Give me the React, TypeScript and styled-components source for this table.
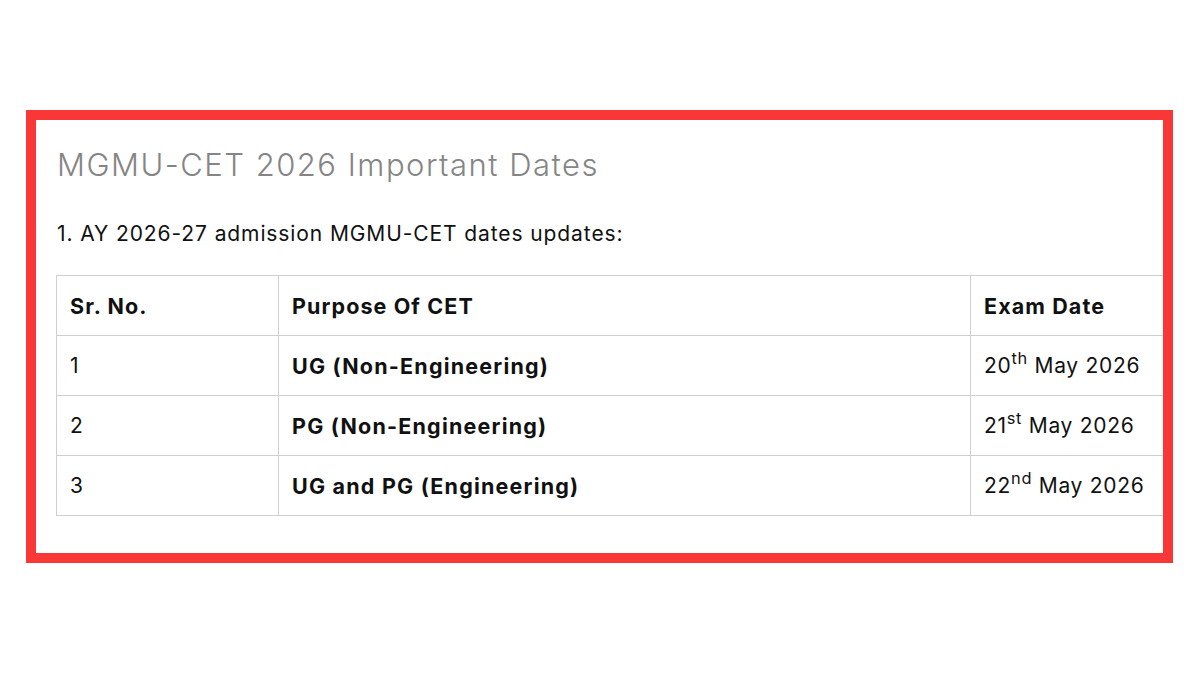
import React from "react";
import styled, { createGlobalStyle } from "styled-components";

const Global = createGlobalStyle`
  html, body { margin: 0; padding: 0; background: #ffffff; }
  body { font-family: "Inter", "Noto Sans", sans-serif; }
`;

const Page = styled.div`
  width: 1200px;
  height: 675px;
  padding: 110px 0 0 26px;
  box-sizing: border-box;
`;

const Frame = styled.section`
  width: 1147px;
  height: 453px;
  border: 10px solid #f93737;
  box-sizing: border-box;
  overflow: hidden;
  padding: 0 0 0 20px;
`;

const Title = styled.h2`
  margin: 25px 0 0 1px;
  font-size: 31px;
  font-weight: 300;
  color: #858585;
  line-height: 40px;
  letter-spacing: 1.5px;
`;

const Sub = styled.p`
  margin: 34px 0 0 1px;
  font-size: 21px;
  font-weight: 400;
  color: #111;
  line-height: 30px;
  letter-spacing: 0.9px;
`;

const Table = styled.table`
  margin-top: 26px;
  border-collapse: collapse;
  width: 1140px;
  table-layout: fixed;
`;

const Cell = styled.td<{ $bold?: boolean }>`
  border: 1px solid #cfcfcf;
  height: 59px;
  padding: 0 13px;
  font-size: ${(p) => (p.$bold ? "21.5px" : "21px")};
  font-weight: ${(p) => (p.$bold ? 700 : 400)};
  letter-spacing: ${(p) => (p.$bold ? "1.2px" : "0.7px")};
  color: #111;
  vertical-align: middle;
  white-space: nowrap;
`;

const Head = styled(Cell).attrs({ as: "th" })`
  text-align: left;
  font-size: 21.5px;
  font-weight: 700;
  letter-spacing: 1.1px;
`;

const Sup = styled.sup`
  font-size: 0.78em;
  line-height: 0;
  vertical-align: 0.55em;
`;

const rows = [
  { n: "1", p: "UG (Non-Engineering)", d: "20", s: "th" },
  { n: "2", p: "PG (Non-Engineering)", d: "21", s: "st" },
  { n: "3", p: "UG and PG (Engineering)", d: "22", s: "nd" },
];

export default function App() {
  return (
    <>
      <Global />
      <Page>
        <Frame>
          <Title>MGMU-CET 2026 Important Dates</Title>
          <Sub>1. AY 2026-27 admission MGMU-CET dates updates:</Sub>
          <Table>
            <colgroup>
              <col style={{ width: 222 }} />
              <col style={{ width: 692 }} />
              <col style={{ width: 226 }} />
            </colgroup>
            <thead>
              <tr>
                <Head>Sr. No.</Head>
                <Head>Purpose Of CET</Head>
                <Head>Exam Date</Head>
              </tr>
            </thead>
            <tbody>
              {rows.map((r) => (
                <tr key={r.n}>
                  <Cell>{r.n}</Cell>
                  <Cell $bold>{r.p}</Cell>
                  <Cell>
                    {r.d}
                    <Sup>{r.s}</Sup> May 2026
                  </Cell>
                </tr>
              ))}
            </tbody>
          </Table>
        </Frame>
      </Page>
    </>
  );
}
